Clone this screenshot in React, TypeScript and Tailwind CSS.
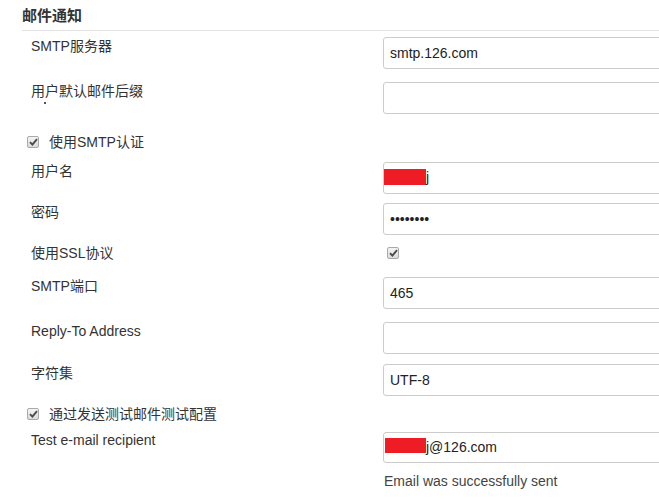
import React from "react";

const font = { fontFamily: '"Liberation Sans", "Noto Sans CJK SC", Arial, sans-serif' };

function Check({ className = "" }: { className?: string }) {
  return (
    <span
      className={
        "flex h-[12px] w-[12px] items-center justify-center rounded-[2px] border border-[#a9a9a9] bg-gradient-to-b from-[#f4f4f4] to-[#dcdcdc] " +
        className
      }
    >
      <svg width="9" height="8" viewBox="0 0 9 8">
        <path d="M1 4.2 L3.4 6.6 L8 1.2" fill="none" stroke="#4a4a4a" strokeWidth="1.9" />
      </svg>
    </span>
  );
}

function Field({ label, children, className = "" }: { label: React.ReactNode; children: React.ReactNode; className?: string }) {
  return (
    <div className={"flex items-start " + className}>
      <div className="relative -mt-[1px] w-[352px] shrink-0 text-[14px] leading-[20px] text-[#333]">{label}</div>
      {children}
    </div>
  );
}

// base look of a text box, padding added per use
const frame = "w-[340px] shrink-0 rounded-[3px] border border-[#ccc] bg-white text-[14px] text-[#222] outline-none";
const box = frame + " h-[32px] px-[6px]";

export default function App() {
  return (
    <div className="h-[499px] w-[659px] overflow-hidden bg-white" style={font}>
      <div className="pl-[22px]">
        <div className="h-[31px] border-b border-[#e3e3e3] pt-[7px] text-[15px] font-bold leading-[18px] text-[#333]">
          邮件通知
        </div>
        <div className="flex flex-col pl-[9px]">
          <Field label="SMTP服务器" className="mt-[6px]">
            <input className={box} readOnly value="smtp.126.com" />
          </Field>
          <Field
            label={
              <>
                用户默认邮件后缀
                <span className="absolute left-[13px] top-[21px] h-[2px] w-[2px] bg-[#555]" />
              </>
            }
            className="mt-[13px]"
          >
            <input className={box} readOnly value="" />
          </Field>
          <div className="-ml-[4px] mt-[18px] flex h-[20px] items-center text-[14px] text-[#333]">
            <Check />
            <span className="ml-[10px]">使用SMTP认证</span>
          </div>
          <Field label="用户名" className="mt-[10px]">
            <div className={frame + " flex h-[32px] items-start"}>
              <span className="mt-[6px] h-[16px] w-[42px] bg-[#ee1c25]" />
              <span className="mt-[6px] leading-[17px]">j</span>
            </div>
          </Field>
          <Field label="密码" className="mt-[9px]">
            <input className={box} type="password" readOnly value="12345678" />
          </Field>
          <div className="mt-[8px] flex h-[20px] items-center">
            <div className="w-[352px] shrink-0 text-[14px] leading-[20px] text-[#333]">使用SSL协议</div>
            <Check className="ml-[4px]" />
          </div>
          <Field label="SMTP端口" className="mt-[14px]">
            <input className={box} readOnly value="465" />
          </Field>
          <Field label="Reply-To Address" className="mt-[13px]">
            <input className={box} readOnly value="" />
          </Field>
          <Field label="字符集" className="mt-[10px]">
            <input className={box} readOnly value="UTF-8" />
          </Field>
          <div className="-ml-[4px] mt-[8px] flex h-[20px] items-center text-[14px] text-[#333]">
            <Check />
            <span className="ml-[10px]">通过发送测试邮件测试配置</span>
          </div>
          <Field label={<span className="relative top-[-1px]">Test e-mail recipient</span>} className="mt-[8px]">
            <div className={frame + " flex h-[31px] items-start"}>
              <span className="ml-[1px] mt-[5px] h-[15px] w-[41px] bg-[#ee1c25]" />
              <span className="mt-[6px] leading-[17px]">j@126.com</span>
            </div>
          </Field>
          <div className="mt-[8px] pl-[353px] text-[14px] leading-[20px] text-[#444]">Email was successfully sent</div>
        </div>
      </div>
    </div>
  );
}
